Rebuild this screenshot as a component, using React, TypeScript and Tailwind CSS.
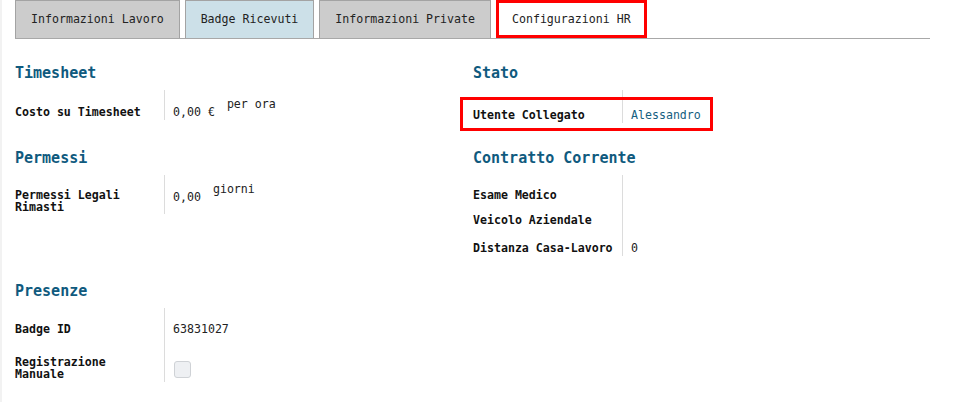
import type { ReactNode } from 'react'

const tabs = ['Informazioni Lavoro', 'Badge Ricevuti', 'Informazioni Private']

function Heading({ children }: { children: ReactNode }) {
  return <h2 className="h-[20px] text-[15px] font-bold leading-[20px] text-[#0f5a7e]">{children}</h2>
}

function Row({ label, value, pad }: { label: ReactNode; value?: ReactNode; pad: string }) {
  return (
    <>
      <div className={`border-r border-[#dcdcdc] font-bold text-[#111] ${pad}`}>{label}</div>
      <div className={`pl-[8px] text-[#222] ${pad}`}>{value}</div>
    </>
  )
}

function Unit({ value, unit, gap }: { value: string; unit: string; gap: string }) {
  return (
    <div className="flex items-end">
      <span>{value}</span>
      <span className={`relative -top-[8px] ${gap}`}>{unit}</span>
    </div>
  )
}

export default function App() {
  return (
    <div className="relative h-[402px] w-full border-l-2 border-[#f2f2f2] bg-white font-['DejaVu_Sans_Mono',monospace] text-[11.6px] leading-[12px] text-[#222]">
      <ul className="ml-[13px] flex h-[39px] w-[915px] border-b border-[#a8a8a8]">
        {tabs.map((t, i) => (
          <li
            key={t}
            className={`mr-[5px] h-[38px] border border-b-0 border-[#a3a3a3] px-[15px] leading-[37px] text-[#222] ${
              i === 1 ? 'bg-[#cce0e8]' : 'bg-[#cccccc]'
            }`}
          >
            {t}
          </li>
        ))}
        <li className="h-[38px] border-[3px] border-[#ff0000] bg-white px-[13px] leading-[32px] text-[#222]">
          Configurazioni HR
        </li>
      </ul>

      <div className="pl-[13px]">
        {/* Timesheet | Stato */}
        <div className="mt-[24px] grid grid-cols-[458px_458px]">
          <div>
            <Heading>Timesheet</Heading>
            <div className="mt-[7px] grid grid-cols-[150px_1fr]">
              <Row
                pad="pt-[16px] pb-[2px]"
                label="Costo su Timesheet"
                value={<Unit value="0,00 €" unit="per ora" gap="ml-[12px]" />}
              />
            </div>
          </div>
          <div className="relative">
            <Heading>Stato</Heading>
            <div className="mt-[7px] grid grid-cols-[150px_1fr]">
              <Row
                pad="pt-[19px] pb-[2px]"
                label="Utente Collegato"
                value={<span className="text-[#15607f]">Alessandro</span>}
              />
            </div>
            <div className="pointer-events-none absolute left-[-13px] top-[34px] h-[34px] w-[253px] border-[3px] border-[#ff0000]" />
          </div>
        </div>

        {/* Permessi | Contratto Corrente */}
        <div className="mt-[25px] grid grid-cols-[458px_458px]">
          <div>
            <Heading>Permessi</Heading>
            <div className="mt-[7px] grid grid-cols-[150px_1fr]">
              <Row
                pad="pt-[14px] pb-[1px]"
                label={
                  <>
                    Permessi Legali
                    <br />
                    Rimasti
                  </>
                }
                value={
                  <div className="pt-[2px]">
                    <Unit value="0,00" unit="giorni" gap="ml-[12px]" />
                  </div>
                }
              />
            </div>
          </div>
          <div>
            <Heading>Contratto Corrente</Heading>
            <div className="mt-[7px] grid grid-cols-[150px_1fr]">
              <Row pad="pt-[14px]" label="Esame Medico" />
              <Row pad="pt-[13px]" label="Veicolo Aziendale" />
              <Row pad="pt-[16px] pb-[2px]" label="Distanza Casa-Lavoro" value="0" />
            </div>
          </div>
        </div>

        {/* Presenze */}
        <div className="mt-[25px] w-[458px]">
          <Heading>Presenze</Heading>
          <div className="mt-[7px] grid grid-cols-[150px_1fr]">
            <Row pad="pt-[15px]" label="Badge ID" value="63831027" />
            <Row
              pad="pt-[21px] pb-[2px]"
              label={
                <>
                  Registrazione
                  <br />
                  Manuale
                </>
              }
              value={
                <div className="pl-[1px] pt-[5px]">
                  <div className="h-[17px] w-[17px] rounded-[3px] border border-[#cfd2d6] bg-[#eef0f3]" />
                </div>
              }
            />
          </div>
        </div>
      </div>
    </div>
  )
}
